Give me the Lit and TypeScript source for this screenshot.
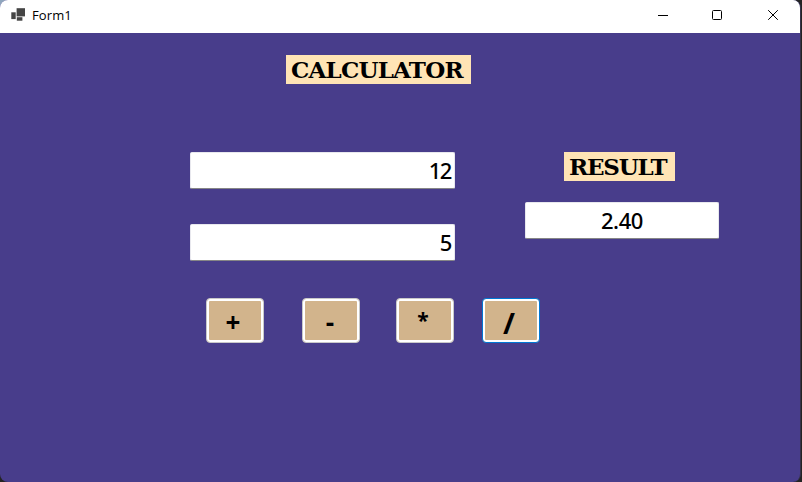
import { LitElement, html, css, svg } from "lit";
import { customElement, property, state } from "lit/decorators.js";
import { classMap } from "lit/directives/class-map.js";

@customElement("title-bar")
class TitleBar extends LitElement {
  @property() caption = "";

  static styles = css`
    :host {
      display: flex;
      align-items: center;
      height: 33px;
      box-sizing: border-box;
      padding: 0 0 3px 10px;
      background: #fff;
      color: #000;
    }
    .icon {
      width: 16px;
      height: 16px;
      margin-right: 6px;
    }
    .caption {
      flex: 1;
      font: 13px/18px "Open Sans", "Noto Sans", sans-serif;
      letter-spacing: 0.1px;
    }
    .controls {
      display: flex;
    }
    .control {
      width: 55px;
      display: flex;
      justify-content: center;
    }
    svg {
      display: block;
    }
  `;

  render() {
    const glyphs = [
      svg`<path d="M1 6.5H11" />`,
      svg`<rect x="0.5" y="1.5" width="9" height="9" rx="1" />`,
      svg`<path d="M1.2 1.2L10.8 10.8M10.8 1.2L1.2 10.8" />`,
    ];
    return html`
      <svg class="icon" viewBox="0 0 16 16" fill="#444">
        <rect x="6.6" y="1.2" width="8.4" height="8.2" />
        <rect x="1.3" y="5.3" width="4.4" height="6.8" />
        <rect x="6.8" y="10.2" width="5.6" height="3.5" />
      </svg>
      <span class="caption">${this.caption}</span>
      <div class="controls">
        ${glyphs.map(
          (g) => html`<span class="control">
            <svg width="12" height="12" fill="none" stroke="#000" stroke-width="1">${g}</svg>
          </span>`
        )}
      </div>
    `;
  }
}

@customElement("app-root")
class AppRoot extends LitElement {
  @state() private first = "12";
  @state() private second = "5";
  @state() private result = "2.40";
  @state() private active = "/";

  static styles = css`
    :host {
      display: block;
      height: 482px;
      background:
        linear-gradient(#8fa6bd, #8fa6bd) 0 0 / 20px 20px no-repeat,
        #242424;
      overflow: hidden;
    }
    .window {
      width: 801px;
      height: 482px;
      box-sizing: border-box;
      border-right: 1px solid #35334a;
      border-radius: 8px;
      overflow: hidden;
      background: #483d8b;
    }
    .form {
      padding: 22px 0 0 190px;
    }
    .label {
      display: flex;
      align-items: center;
      box-sizing: border-box;
      height: 29px;
      padding-left: 5px;
      background: #ffe4b5;
      color: #000;
      font: bold 23px/29px "DejaVu Serif", serif;
      white-space: nowrap;
    }
    .heading {
      width: 185px;
      margin-left: 96px;
      letter-spacing: -0.8px;
    }
    .columns {
      display: flex;
      gap: 70px;
      margin-top: 68px;
    }
    .operands {
      display: flex;
      flex-direction: column;
      gap: 35px;
      width: 265px;
    }
    .outcome {
      display: flex;
      flex-direction: column;
      gap: 21px;
      width: 194px;
    }
    .outcome .label {
      width: 111px;
      margin-left: 39px;
      letter-spacing: -1.2px;
    }
    .field {
      height: 37px;
      box-sizing: border-box;
      padding: 0 3px;
      background: #fff;
      border: 1px solid #e8e8ee;
      border-bottom-color: #868686;
      border-radius: 2px;
      color: #000;
      font: 500 22px/35px "Noto Sans", "Open Sans", sans-serif;
      letter-spacing: -1.4px;
      text-align: right;
    }
    .field.centered {
      letter-spacing: -0.4px;
      text-align: center;
    }
    .operators {
      display: flex;
      margin: 37px 0 0 16px;
    }
    .operator {
      width: 58px;
      height: 45px;
      box-sizing: border-box;
      margin: 0 38px 0 0;
      padding: 4px 4px 0 0;
      background: #d2b48c;
      border: 1px solid #c9c9c9;
      border-radius: 4px;
      box-shadow: inset 0 0 0 2px #fff;
      color: #000;
      font: bold 26px/39px "Open Sans", "Noto Sans", sans-serif;
      text-align: center;
    }
    .operator:nth-child(2) {
      margin-right: 36px;
      padding-right: 2px;
    }
    .operator:nth-child(3) {
      margin-right: 28px;
      padding-top: 0;
      font-size: 21px;
    }
    .operator:nth-child(4) {
      font-size: 29px;
      padding-top: 3px;
    }
    .operator.active {
      border-color: #0078d4;
    }
  `;

  private calculate(op: string) {
    const a = Number(this.first);
    const b = Number(this.second);
    const value = op === "+" ? a + b : op === "-" ? a - b : op === "*" ? a * b : a / b;
    this.active = op;
    this.result = value.toFixed(2);
  }

  render() {
    return html`
      <div class="window">
        <title-bar caption="Form1"></title-bar>
        <div class="form">
          <div class="label heading">CALCULATOR</div>
          <div class="columns">
            <div class="operands">
              <div class="field">${this.first}</div>
              <div class="field">${this.second}</div>
            </div>
            <div class="outcome">
              <div class="label">RESULT</div>
              <div class="field centered">${this.result}</div>
            </div>
          </div>
          <div class="operators">
            ${["+", "-", "*", "/"].map(
              (op) => html`<button
                class=${classMap({ operator: true, active: op === this.active })}
                @click=${() => this.calculate(op)}
              >${op}</button>`
            )}
          </div>
        </div>
      </div>
    `;
  }
}
